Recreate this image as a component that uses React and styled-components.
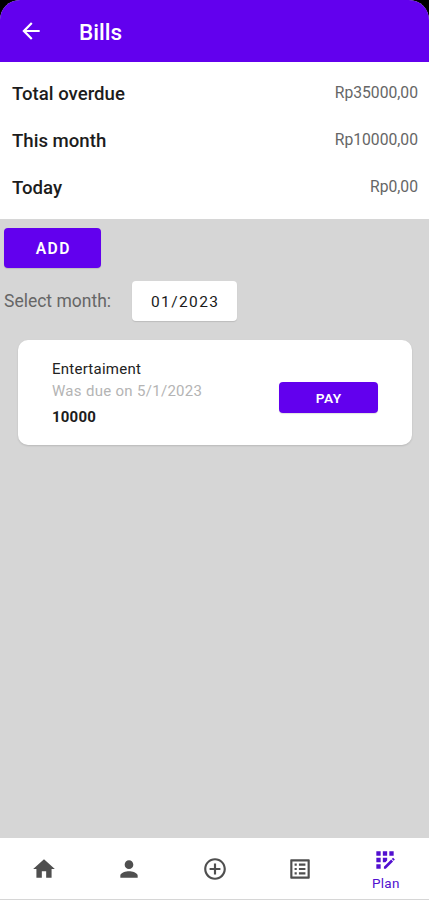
import React from "react";
import styled, { createGlobalStyle } from "styled-components";
import {
  MdArrowBack,
  MdHome,
  MdPerson,
  MdAddCircleOutline,
  MdListAlt,
  MdAppRegistration,
} from "react-icons/md";

const GlobalStyle = createGlobalStyle`
  * {
    box-sizing: border-box;
  }
  body {
    margin: 0;
    background: #000000;
    font-family: Roboto, "Liberation Sans", sans-serif;
  }
`;

const Screen = styled.div`
  display: flex;
  flex-direction: column;
  width: 429px;
  height: 900px;
  overflow: hidden;
  border-radius: 20px 20px 0 0;
  background: #d6d6d6;
`;

const Header = styled.header`
  display: flex;
  align-items: center;
  gap: 35px;
  height: 62px;
  padding: 0 18px;
  background: #6200ee;
  color: #ffffff;
  svg {
    display: block;
  }
`;

const Title = styled.h1`
  margin: 1px 0 0;
  font-size: 22.5px;
  font-weight: 500;
  line-height: 28px;
`;

const Summary = styled.section`
  height: 157px;
  padding: 9px 11px 0 12px;
  background: #ffffff;
`;

const SummaryRow = styled.div`
  display: flex;
  justify-content: space-between;
  height: 47px;
  line-height: 47px;
`;

const SummaryLabel = styled.span`
  font-size: 18.6px;
  font-weight: 500;
  color: #1c1c1c;
`;

const SummaryValue = styled.span`
  font-size: 15.7px;
  line-height: 44px;
  color: #666666;
`;

const Content = styled.main`
  flex: 1;
  padding: 9px 17px 0 4px;
`;

const Button = styled.button`
  display: block;
  width: ${props => props.$width}px;
  height: ${props => props.$height}px;
  padding: 1px 0 0 ${props => props.$spacing}px;
  border: 0;
  border-radius: 4px;
  background: ${props => (props.$light ? "#ffffff" : "#6200ee")};
  color: ${props => (props.$light ? "#1a1a1a" : "#ffffff")};
  font-family: inherit;
  font-size: ${props => props.$size}px;
  font-weight: ${props => (props.$light ? 400 : 600)};
  letter-spacing: ${props => props.$spacing}px;
  box-shadow: 0 1px 1px rgba(0, 0, 0, 0.12);
`;

const MonthRow = styled.div`
  display: flex;
  align-items: center;
  gap: 21px;
  margin-top: 13px;
`;

const MonthLabel = styled.span`
  width: 107px;
  font-size: 17.5px;
  white-space: nowrap;
  color: #666666;
`;

const BillCard = styled.article`
  display: flex;
  align-items: center;
  justify-content: space-between;
  height: 105px;
  margin: 19px 0 0 14px;
  padding: 9px 34px 0 34px;
  border-radius: 10px;
  background: #ffffff;
  box-shadow: 0 1px 2px rgba(0, 0, 0, 0.14);
`;

const BillInfo = styled.div`
  display: flex;
  flex-direction: column;
  margin-top: -8px;
`;

const BillName = styled.span`
  font-size: 15px;
  line-height: 22px;
  letter-spacing: 0.25px;
  color: #222222;
`;

const BillDue = styled.span`
  font-size: 15px;
  line-height: 22px;
  letter-spacing: 0.3px;
  color: #b4b4b4;
`;

const BillAmount = styled.span`
  margin-top: 4px;
  font-size: 15px;
  font-weight: 700;
  line-height: 22px;
  letter-spacing: 0.2px;
  color: #1c1c1c;
`;

const BottomNav = styled.nav`
  display: flex;
  height: 62px;
  padding: 0 1px;
  border-bottom: 1px solid #d6d6d6;
  background: #ffffff;
`;

const NavItem = styled.a`
  display: flex;
  flex: 1;
  flex-direction: column;
  align-items: center;
  padding-top: ${props => (props.$active ? 9 : 18)}px;
  font-size: 13.5px;
  line-height: 16px;
  letter-spacing: 0.3px;
  color: ${props => (props.$active ? "#5210d0" : "#4f4f4f")};
  svg {
    display: block;
    flex: none;
  }
`;

const NavText = styled.span`
  margin-top: 2px;
  padding-left: 1px;
`;

const totals = [
  { label: "Total overdue", value: "Rp35000,00" },
  { label: "This month", value: "Rp10000,00" },
  { label: "Today", value: "Rp0,00" },
];

const tabs = [
  { id: "home", Icon: MdHome },
  { id: "profile", Icon: MdPerson },
  { id: "add", Icon: MdAddCircleOutline },
  { id: "list", Icon: MdListAlt },
  { id: "plan", Icon: MdAppRegistration, label: "Plan" },
];

const App = () => {
  return (
    <>
      <GlobalStyle />
      <Screen>
        <Header>
          <MdArrowBack size={26} />
          <Title>Bills</Title>
        </Header>
        <Summary>
          {totals.map(row => (
            <SummaryRow key={row.label}>
              <SummaryLabel>{row.label}</SummaryLabel>
              <SummaryValue>{row.value}</SummaryValue>
            </SummaryRow>
          ))}
        </Summary>
        <Content>
          <Button $width={97} $height={40} $size={15.7} $spacing={1.4}>
            ADD
          </Button>
          <MonthRow>
            <MonthLabel>Select month:</MonthLabel>
            <Button $light $width={105} $height={40} $size={15.5} $spacing={1.4}>
              01/2023
            </Button>
          </MonthRow>
          <BillCard>
            <BillInfo>
              <BillName>Entertaiment</BillName>
              <BillDue>Was due on 5/1/2023</BillDue>
              <BillAmount>10000</BillAmount>
            </BillInfo>
            <Button $width={99} $height={31} $size={13.7} $spacing={0.4}>
              PAY
            </Button>
          </BillCard>
        </Content>
        <BottomNav>
          {tabs.map(({ id, Icon, label }) => (
            <NavItem key={id} $active={id === "plan"}>
              <Icon size={26} />
              {label && <NavText>{label}</NavText>}
            </NavItem>
          ))}
        </BottomNav>
      </Screen>
    </>
  );
};

export default App;
